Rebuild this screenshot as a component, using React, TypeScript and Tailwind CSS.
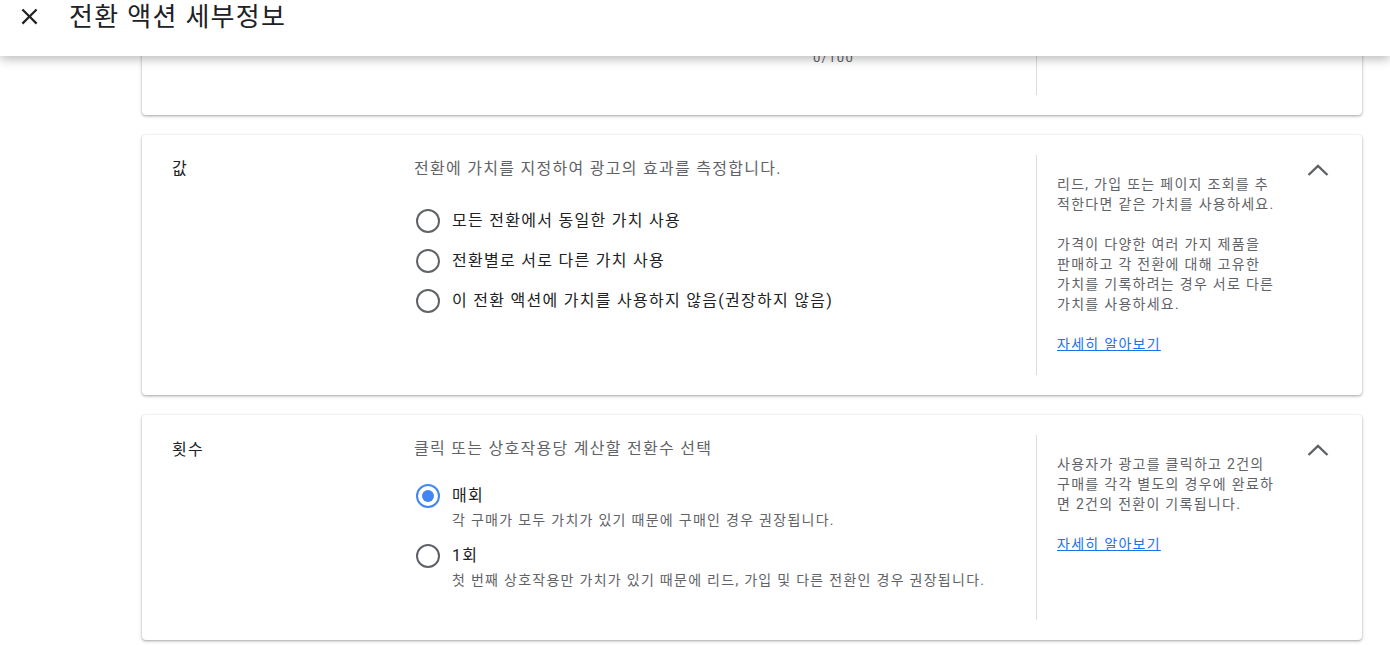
function Chevron() {
    return (
        <svg width="22" height="12" viewBox="0 0 22 12" className="mt-[9px] shrink-0">
            <polyline points="1.5,11 11,1.8 20.5,11" fill="none" stroke="#5f6368" strokeWidth="2.4" />
        </svg>
    );
}

function Radio({ checked = false }: { checked?: boolean }) {
    return (
        <span
            className={
                checked
                    ? "ml-[2px] flex h-6 w-6 shrink-0 items-center justify-center rounded-full border-2 border-[#4285f4]"
                    : "ml-[2px] flex h-6 w-6 shrink-0 items-center justify-center rounded-full border-2 border-[#5f6368]"
            }
        >
            {checked && <span className="h-3 w-3 rounded-full bg-[#4285f4]" />}
        </span>
    );
}

export default function App() {
    return (
        <div className="flex h-[645px] flex-col overflow-hidden bg-white font-['Roboto','Noto_Sans_CJK_KR',sans-serif] tracking-[0.08em] text-[#202124]">
            <header className="relative z-10 flex h-14 shrink-0 items-start bg-white shadow-[0_3px_10px_rgba(0,0,0,0.28)]">
                <svg width="27" height="27" viewBox="0 0 24 24" className="ml-[16px] mt-[3px]">
                    <path
                        fill="#202124"
                        d="M19 6.41L17.59 5 12 10.59 6.41 5 5 6.41 10.59 12 5 17.59 6.41 19 12 13.41 17.59 19 19 17.59 13.41 12z"
                    />
                </svg>
                <h1 className="ml-[26px] mt-[1px] text-[26px] leading-8 font-normal tracking-[0.05em]">전환 액션 세부정보</h1>
            </header>

            <main className="flex flex-col gap-5 pl-[142px] pr-[28px]">
                {/* 이름 카드 (위쪽은 헤더에 가려짐) */}
                <section className="-mt-[86px] flex rounded bg-white py-5 shadow-[0_1px_2px_0_rgba(60,64,67,0.3),0_1px_3px_1px_rgba(60,64,67,0.15)]">
                    <div className="w-[272px] shrink-0 pl-[30px] text-base leading-6">이름</div>
                    <div className="flex flex-1 flex-col pr-5">
                        <div className="h-[56px] w-[440px] border-b border-[#80868b]" />
                        <div className="mt-1 h-4 w-[440px] text-right text-[13px] leading-4 text-[#5f6368]">0/100</div>
                        <div className="h-[29px]" />
                    </div>
                    <div className="w-[326px] shrink-0 border-l border-[#dadce0]" />
                </section>

                {/* 값 */}
                <section className="flex rounded bg-white py-5 shadow-[0_1px_2px_0_rgba(60,64,67,0.3),0_1px_3px_1px_rgba(60,64,67,0.15)]">
                    <div className="w-[272px] shrink-0 pl-[30px] pt-[2px] text-base leading-6">값</div>
                    <div className="flex flex-1 flex-col pr-5 pt-[2px]">
                        <p className="text-base leading-6 text-[#5f6368]">전환에 가치를 지정하여 광고의 효과를 측정합니다.</p>
                        <div className="mt-5 flex flex-col">
                            {["모든 전환에서 동일한 가치 사용", "전환별로 서로 다른 가치 사용", "이 전환 액션에 가치를 사용하지 않음(권장하지 않음)"].map(
                                (label) => (
                                    <label key={label} className="flex h-10 items-center gap-[12px]">
                                        <Radio />
                                        <span className="text-base leading-6 text-[#202124]">{label}</span>
                                    </label>
                                )
                            )}
                        </div>
                    </div>
                    <div className="flex w-[326px] shrink-0 border-l border-[#dadce0] pl-5 pr-[33px]">
                        <div className="w-[230px] whitespace-nowrap pb-[21px] pt-[19px] text-sm leading-5 text-[#5f6368]">
                            <p>
                                리드, 가입 또는 페이지 조회를 추<br />
                                적한다면 같은 가치를 사용하세요.
                            </p>
                            <p className="mt-5">
                                가격이 다양한 여러 가지 제품을
                                <br />
                                판매하고 각 전환에 대해 고유한
                                <br />
                                가치를 기록하려는 경우 서로 다른
                                <br />
                                가치를 사용하세요.
                            </p>
                            <a className="mt-5 block w-fit text-[#1a73e8] underline">자세히 알아보기</a>
                        </div>
                        <div className="ml-auto">
                            <Chevron />
                        </div>
                    </div>
                </section>

                {/* 횟수 */}
                <section className="flex rounded bg-white py-5 shadow-[0_1px_2px_0_rgba(60,64,67,0.3),0_1px_3px_1px_rgba(60,64,67,0.15)]">
                    <div className="w-[272px] shrink-0 pl-[30px] pt-[3px] text-base leading-6">횟수</div>
                    <div className="flex flex-1 flex-col pb-[30px] pr-5 pt-[2px]">
                        <p className="text-base leading-6 text-[#5f6368]">클릭 또는 상호작용당 계산할 전환수 선택</p>
                        <div className="mt-[21px] flex flex-col gap-3">
                            <div>
                                <label className="flex h-7 items-center gap-[12px]">
                                    <Radio checked />
                                    <span className="text-base leading-6">매회</span>
                                </label>
                                <p className="pl-[38px] text-sm leading-5 text-[#5f6368]">
                                    각 구매가 모두 가치가 있기 때문에 구매인 경우 권장됩니다.
                                </p>
                            </div>
                            <div>
                                <label className="flex h-7 items-center gap-[12px]">
                                    <Radio />
                                    <span className="text-base leading-6">1회</span>
                                </label>
                                <p className="pl-[38px] text-sm leading-5 text-[#5f6368]">
                                    첫 번째 상호작용만 가치가 있기 때문에 리드, 가입 및 다른 전환인 경우 권장됩니다.
                                </p>
                            </div>
                        </div>
                    </div>
                    <div className="flex w-[326px] shrink-0 border-l border-[#dadce0] pl-5 pr-[33px]">
                        <div className="w-[230px] whitespace-nowrap pb-5 pt-[19px] text-sm leading-5 text-[#5f6368]">
                            <p>
                                사용자가 광고를 클릭하고 2건의
                                <br />
                                구매를 각각 별도의 경우에 완료하
                                <br />
                                면 2건의 전환이 기록됩니다.
                            </p>
                            <a className="mt-5 block w-fit text-[#1a73e8] underline">자세히 알아보기</a>
                        </div>
                        <div className="ml-auto">
                            <Chevron />
                        </div>
                    </div>
                </section>
            </main>
        </div>
    );
}
